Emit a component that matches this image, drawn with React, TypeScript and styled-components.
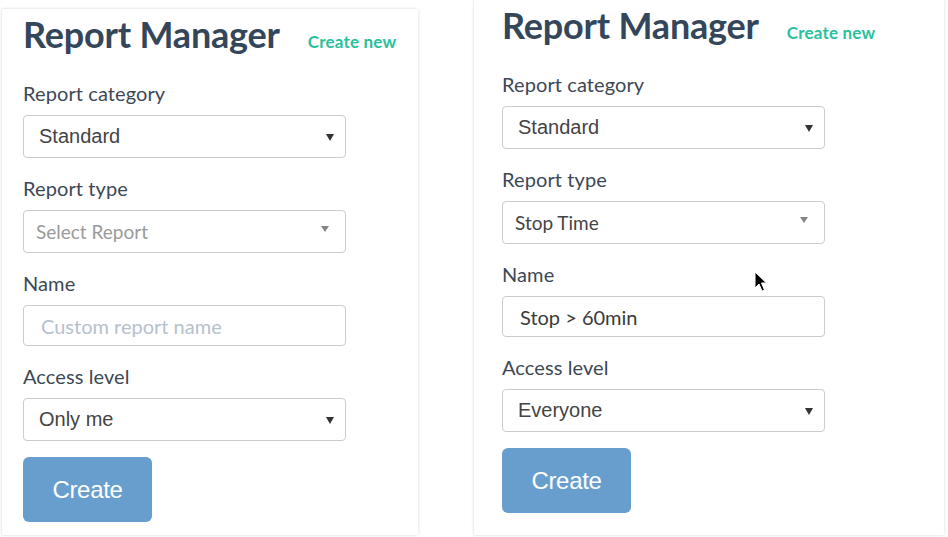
import React from 'react';
import styled, {createGlobalStyle} from "styled-components";

const GlobalStyle = createGlobalStyle`
  html, body {
    margin: 0;
    padding: 0;
    background: #ffffff;
  }
  body {
    font-family: Lato, "Noto Sans", sans-serif;
    width: 948px;
    height: 537px;
    overflow: hidden;
  }
`;

const Page = styled.div`
  display: flex;
  align-items: flex-start;
  padding-left: 2px;
  gap: 56px;
`;

const Panel = styled.div<{ $width: number; $top: number; $pad: number }>`
  position: relative;
  box-sizing: border-box;
  flex-shrink: 0;
  width: ${p => p.$width}px;
  height: ${p => 535 - p.$top}px;
  margin-top: ${p => p.$top}px;
  padding: 3px ${p => p.$pad}px 0;
  background: #ffffff;
  box-shadow: 0 0 3px rgba(0, 0, 0, 0.16);
`;

const Header = styled.div`
  display: flex;
  align-items: baseline;
  gap: 28px;
  margin-bottom: 25px;
  white-space: nowrap;
`;

const Title = styled.h1`
  margin: 0;
  flex-shrink: 0;
  font-family: Lato, sans-serif;
  font-size: 36px;
  line-height: 44px;
  font-weight: 700;
  color: #34465a;
  letter-spacing: -0.2px;
`;

const CreateLink = styled.a`
  flex-shrink: 0;
  font-family: Lato, sans-serif;
  font-size: 17px;
  font-weight: 700;
  letter-spacing: 0.2px;
  color: #29c19b;
  text-decoration: none;
`;

const Field = styled.div`
  margin-bottom: 18px;
`;

const Label = styled.div`
  font-family: Lato, sans-serif;
  font-size: 20px;
  line-height: 24px;
  letter-spacing: 0.1px;
  color: #3c4856;
  margin-bottom: 10px;
`;

const SelectBox = styled.div<{ $plain?: boolean }>`
  box-sizing: border-box;
  width: 323px;
  height: 43px;
  display: flex;
  align-items: center;
  justify-content: space-between;
  padding: 0 ${p => p.$plain ? 16 : 11}px 0 ${p => p.$plain ? 12 : 15}px;
  border: 1px solid #cccccc;
  border-radius: 4px;
  background: #ffffff;
`;

const SelectText = styled.span<{ $lato?: boolean; $muted?: boolean }>`
  font-family: ${p => p.$lato ? 'Lato, sans-serif' : '"Liberation Sans", Arial, sans-serif'};
  font-size: ${p => p.$lato ? 19 : 20}px;
  color: ${p => p.$muted ? '#9a9a9a' : '#444444'};
`;

const Caret = styled.span<{ $light?: boolean }>`
  width: 0;
  height: 0;
  border-left: ${p => p.$light ? 4.5 : 4}px solid transparent;
  border-right: ${p => p.$light ? 4.5 : 4}px solid transparent;
  border-top: ${p => p.$light ? 6 : 7}px solid ${p => p.$light ? '#858585' : '#333333'};
  margin-top: ${p => p.$light ? -6 : 1}px;
`;

const TextInput = styled.input`
  box-sizing: border-box;
  display: block;
  width: 323px;
  height: 41px;
  padding: 0 0 0 17px;
  border: 1px solid #cccccc;
  border-radius: 4px;
  font-family: Lato, sans-serif;
  font-size: 20px;
  color: #3a3a3a;
  outline: none;

  &::placeholder {
    color: #b5c1cd;
  }
`;

const Button = styled.button`
  width: 129px;
  height: 65px;
  margin-top: -2px;
  border: none;
  border-radius: 6px;
  background: #689ece;
  color: #ffffff;
  font-family: "Liberation Sans", Arial, sans-serif;
  font-size: 24px;
  letter-spacing: -0.3px;
`;

const Cursor = styled.svg`
  position: absolute;
  left: 280px;
  top: 271px;
`;

interface ManagerProps {
    width: number;
    top: number;
    pad: number;
    reportType?: string;
    name?: string;
    access: string;
    showCursor?: boolean;
}

function ReportManager({width, top, pad, reportType, name, access, showCursor}: ManagerProps) {
    return <Panel $width={width} $top={top} $pad={pad}>
        <Header>
            <Title>Report Manager</Title>
            <CreateLink href="#">Create new</CreateLink>
        </Header>

        <Field>
            <Label>Report category</Label>
            <SelectBox>
                <SelectText>Standard</SelectText>
                <Caret/>
            </SelectBox>
        </Field>

        <Field>
            <Label>Report type</Label>
            <SelectBox $plain>
                <SelectText $lato $muted={!reportType}>{reportType || 'Select Report'}</SelectText>
                <Caret $light/>
            </SelectBox>
        </Field>

        <Field>
            <Label>Name</Label>
            <TextInput placeholder="Custom report name" defaultValue={name}/>
        </Field>

        <Field>
            <Label>Access level</Label>
            <SelectBox>
                <SelectText>{access}</SelectText>
                <Caret/>
            </SelectBox>
        </Field>

        <Button>Create</Button>

        {showCursor &&
            <Cursor width="14" height="22" viewBox="0 0 14 22">
                <path d="M1 1 L1 17 L5 13 L8 20 L10.5 19 L7.5 12 L12.5 12 Z"
                      fill="#000" stroke="#fff" strokeWidth="1"/>
            </Cursor>}
    </Panel>;
}

export default function App() {
    return <>
        <GlobalStyle/>
        <Page>
            <ReportManager width={416} top={9} pad={21} access="Only me"/>
            <ReportManager width={470} top={0} pad={28} reportType="Stop Time" name="Stop > 60min"
                           access="Everyone" showCursor/>
        </Page>
    </>;
}
